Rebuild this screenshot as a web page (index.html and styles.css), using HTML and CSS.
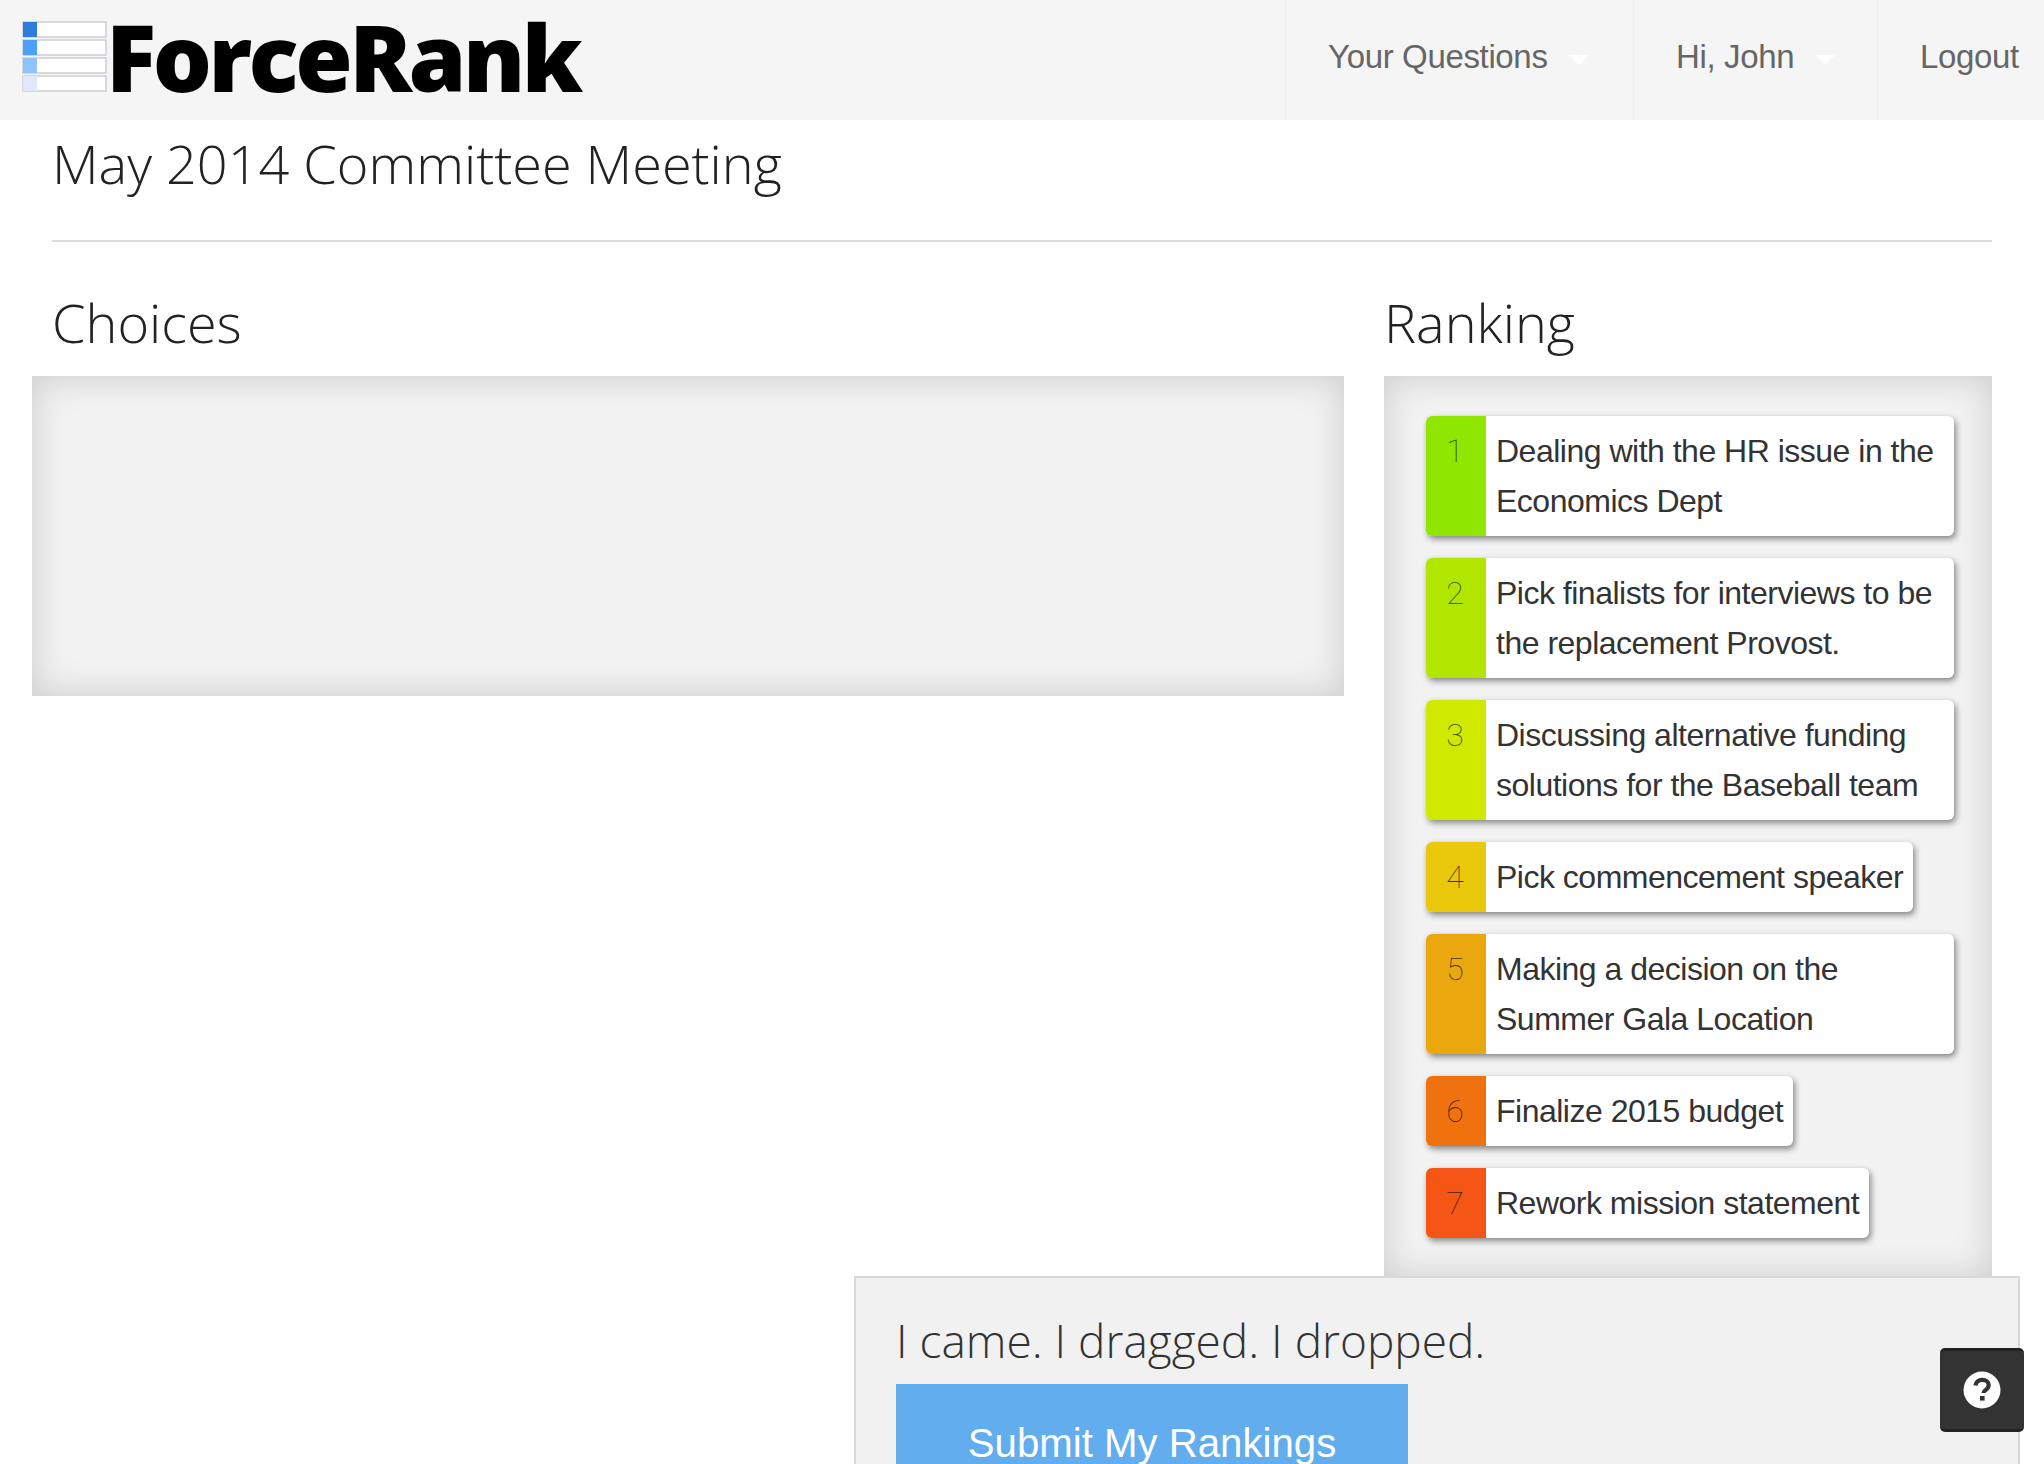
FILE: index.html
```html
<!DOCTYPE html>
<html lang="en">
<head>
<meta charset="utf-8">
<title>ForceRank</title>
<link rel="stylesheet" href="styles.css">
</head>
<body>
<header class="topbar">
  <a class="brand" href="#">
    <svg class="brand-icon" width="86" height="72" viewBox="0 0 86 72">
      <g fill="#fff" stroke="#ccced6" stroke-width="1.5">
        <rect x="1" y="1" width="83" height="15"/>
        <rect x="1" y="19" width="83" height="15"/>
        <rect x="1" y="37" width="83" height="15"/>
        <rect x="1" y="55" width="83" height="15"/>
      </g>
      <rect x="1" y="1" width="14" height="15" fill="#2b7cdc"/>
      <rect x="1" y="19" width="14" height="15" fill="#4d9fff"/>
      <rect x="1" y="37" width="14" height="15" fill="#8fc2ff"/>
      <rect x="1" y="55" width="14" height="15" fill="#e2e7fb"/>
    </svg>
    <span class="brand-name">ForceRank</span>
  </a>
  <nav class="nav">
    <a class="nav-item nav-q" href="#">Your Questions<span class="caret"></span></a>
    <a class="nav-item nav-hi" href="#">Hi, John<span class="caret"></span></a>
    <a class="nav-item nav-out" href="#">Logout</a>
  </nav>
</header>
<main class="page">
  <h1 class="title">May 2014 Committee Meeting</h1>
  <hr class="rule">
  <div class="columns">
    <section class="col-choices">
      <h2 class="col-head">Choices</h2>
      <div class="well well-empty"></div>
    </section>
    <section class="col-ranking">
      <h2 class="col-head">Ranking</h2>
      <div class="well well-rank">
        <div class="item"><span class="num c1">1</span><span class="label">Dealing with the HR issue in the Economics Dept</span></div>
        <div class="item"><span class="num c2">2</span><span class="label">Pick finalists for interviews to be the replacement Provost.</span></div>
        <div class="item"><span class="num c3">3</span><span class="label">Discussing alternative funding solutions for the Baseball team</span></div>
        <div class="item"><span class="num c4">4</span><span class="label">Pick commencement speaker</span></div>
        <div class="item"><span class="num c5">5</span><span class="label">Making a decision on the Summer Gala Location</span></div>
        <div class="item"><span class="num c6">6</span><span class="label">Finalize 2015 budget</span></div>
        <div class="item"><span class="num c7">7</span><span class="label">Rework mission statement</span></div>
      </div>
    </section>
  </div>
</main>
<aside class="submit-bar">
  <p class="submit-text">I came. I dragged. I dropped.</p>
  <a class="submit-btn" href="#">Submit My Rankings</a>
</aside>
<button class="help" type="button" aria-label="Help">
  <svg width="38" height="38" viewBox="0 0 38 38">
    <circle cx="19" cy="19" r="18.5" fill="#fff"/>
    <path d="M12.5 14.5c.3-3.6 3-5.7 6.700-5.700 3.900 0 6.500 2.200 6.500 5.300 0 2.400-1.300 3.700-3 4.800-1.600 1-2.200 1.700-2.200 3.100" fill="none" stroke="#333" stroke-width="4.200"/>
    <rect x="17" y="25" width="4.600" height="4.600" fill="#333"/>
  </svg>
</button>
</body>
</html>
```
FILE: styles.css
```css
* { box-sizing: border-box; }
html, body { margin: 0; padding: 0; background: #fff; }
body { font-family: "Liberation Sans", Arial, sans-serif; color: #222; overflow: hidden; height: 1464px; }
a { text-decoration: none; color: inherit; }

.topbar { display: flex; justify-content: space-between; height: 120px; background: #f5f5f5; }
.brand { display: flex; align-items: center; padding: 0 0 6px 22px; }
.brand-icon { display: block; flex: none; }
.brand-name { font-family: "Open Sans", sans-serif; font-weight: 800; font-size: 93px; line-height: 100px; letter-spacing: -3.5px; color: #000; margin: -3px 0 0 -2px; }

.nav { display: flex; }
.nav-item { display: flex; align-items: center; height: 120px; padding: 0 0 6px 42px; border-left: 1px solid #eeeeee; font-size: 33px; letter-spacing: -0.35px; color: #666; }
.nav-q { width: 348px; }
.nav-hi { width: 244px; }
.nav-out { width: 167px; }
.caret { width: 0; height: 0; margin-left: 21px; margin-top: 6px; border-style: solid; border-width: 10px 10px 0; border-color: #fff transparent transparent; }

.page { padding: 0 52px 0 32px; }
.title { margin: 0 0 0 20px; font-family: "Open Sans", sans-serif; font-weight: 300; font-size: 54px; line-height: 86px; color: #222; }
.rule { margin: 34px 0 0 20px; border: 0; height: 2px; background: #dcdcdc; }

.columns { display: grid; grid-template-columns: 1312px 608px; column-gap: 40px; align-items: start; }
.col-head { margin: 0; padding-top: 26px; font-family: "Open Sans", sans-serif; font-weight: 300; font-size: 54px; line-height: 108px; height: 134px; color: #222; }
.col-choices .col-head { padding-left: 20px; }
.well { background: #f2f2f2; box-shadow: inset 0 0 36px rgba(0, 0, 0, 0.16); }
.well-empty { height: 320px; }
.well-rank { display: flex; flex-direction: column; align-items: flex-start; gap: 22px; padding: 40px 38px 40px 42px; height: 902px; }

.item { display: flex; max-width: 528px; background: #fff; border-radius: 6px; box-shadow: 2px 3px 6px rgba(0, 0, 0, 0.45); }
.num { flex: none; width: 60px; padding: 10px 2px 0 0; text-align: center; font-family: Roboto, sans-serif; font-weight: 100; font-size: 32px; line-height: 50px; color: rgba(0, 0, 0, 0.75); border-radius: 6px 0 0 6px; }
.label { padding: 10px; font-size: 32px; line-height: 50px; letter-spacing: -0.5px; color: #333; }
.c1 { background: #8fe600; }
.c2 { background: #b0e600; }
.c3 { background: #d0e900; }
.c4 { background: #e9c80b; }
.c5 { background: #eba80e; }
.c6 { background: #f0720f; }
.c7 { background: #f55515; }

.submit-bar { position: fixed; left: 854px; top: 1276px; width: 1166px; height: 300px; padding: 24px 40px; background: #f1f1f1; border: 2px solid #d8d8d8; }
.submit-text { margin: 0 0 6px; font-family: "Open Sans", sans-serif; font-weight: 300; font-size: 46px; line-height: 76px; color: #333; }
.submit-btn { display: block; width: 512px; height: 180px; padding-top: 35px; background: #62adee; color: #fff; font-size: 40.200px; line-height: 50px; text-align: center; }

.help { position: fixed; left: 1940px; top: 1348px; width: 84px; height: 84px; padding: 0; display: flex; align-items: center; justify-content: center; background: #333; border: 0; border-top: 3px solid #222; border-bottom: 3px solid #222; border-radius: 5px; }
```
